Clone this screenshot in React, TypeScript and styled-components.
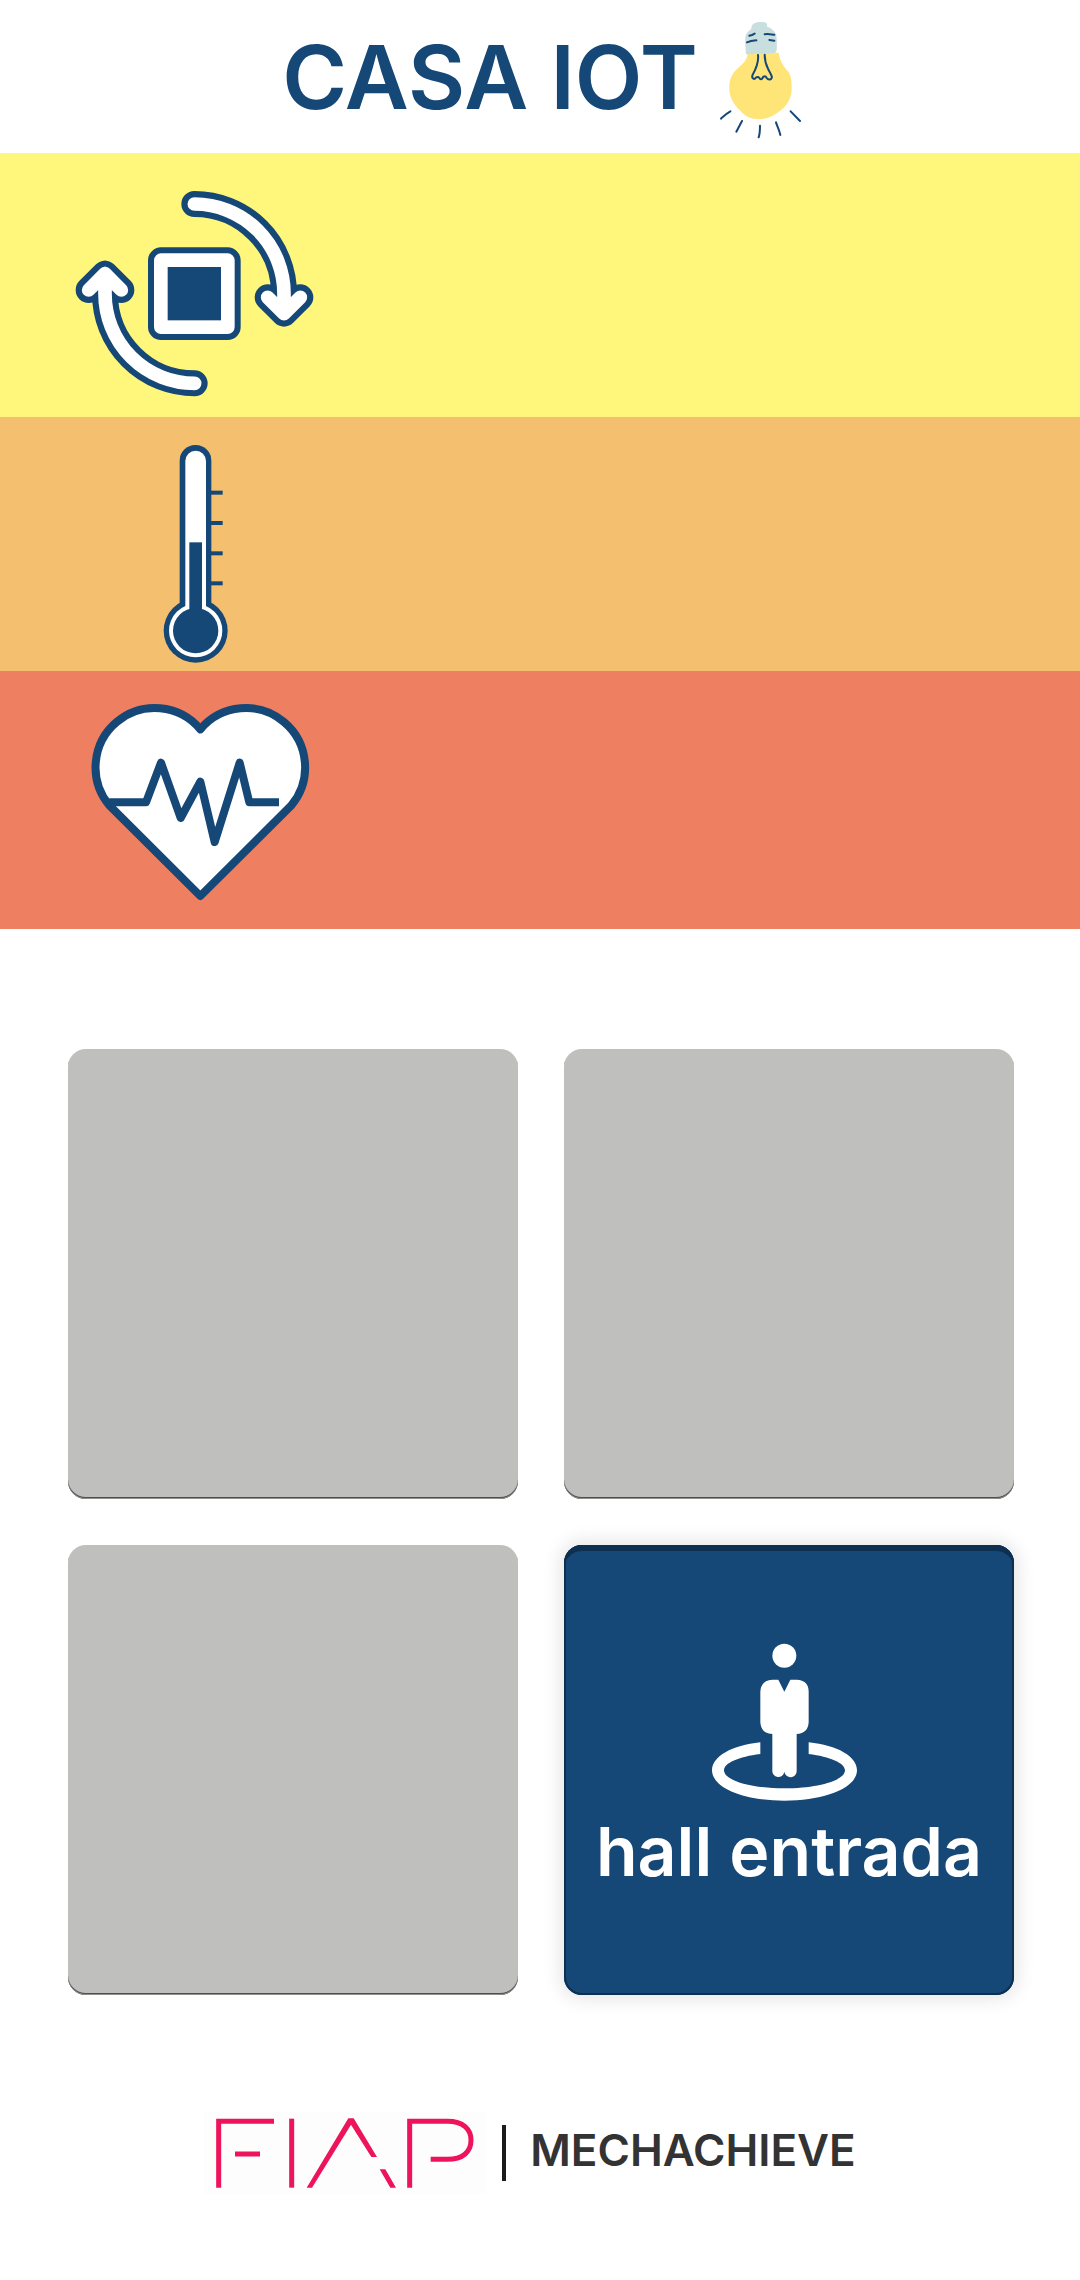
import React from "react";
import styled, { createGlobalStyle } from "styled-components";

const NAVY = "#154777";
const PINK = "#ee145b";

const GlobalStyle = createGlobalStyle`
  *, *::before, *::after { box-sizing: border-box; }
  body {
    margin: 0;
    background: #fff;
    font-family: Inter, "Liberation Sans", sans-serif;
    font-weight: 600;
  }
`;

const Page = styled.div`
  display: flex;
  flex-direction: column;
`;

const Header = styled.header`
  display: flex;
  justify-content: center;
  align-items: center;
  gap: 8px;
  padding-left: 4px;
`;

const Title = styled.h1`
  margin: 0;
  font-size: 88px;
  line-height: 100px;
  font-weight: 600;
  color: ${NAVY};
  white-space: nowrap;
`;

const Drawing = styled.svg`
  display: block;
  flex: none;
`;

const Reading = styled.section<{ $color: string }>`
  display: flex;
  align-items: center;
  padding: 0 60px;
  background: ${(p) => p.$color};
`;

const Rooms = styled.main`
  display: grid;
  grid-template-columns: 1fr 1fr;
  gap: 46px;
  padding: 120px 66px 0 68px;
`;

const Room = styled.button<{ $active?: boolean }>`
  display: flex;
  flex-direction: column;
  align-items: center;
  justify-content: center;
  aspect-ratio: 1;
  padding: 4px 0 0;
  border: 0;
  border-radius: 18px;
  font: inherit;
  color: #fff;
  cursor: pointer;
  background: ${(p) => (p.$active ? NAVY : "#bfbfbd")};
  box-shadow: ${(p) =>
    p.$active
      ? "inset 0 6px 0 #0d2f50, inset 0 0 0 2px #0d2f50, 0 0 18px 4px rgba(0, 0, 0, 0.1)"
      : "inset 0 -1px 0 #8f928f, inset 0 -2px 0 #4c4e4c"};
`;

const RoomName = styled.span`
  font-size: 68px;
  line-height: 100px;
  white-space: nowrap;
`;

const Footer = styled.footer`
  display: flex;
  justify-content: center;
  align-items: center;
  padding: 117px 20px 86px 0;
`;

const Divider = styled.span`
  width: 4px;
  height: 56px;
  margin: 0 24px 0 16px;
  background: #1b1b1b;
`;

const Team = styled.span`
  padding-bottom: 6px;
  font-size: 44px;
  line-height: 56px;
  color: #333;
`;

function Bulb() {
  return (
    <Drawing width="96" height="153" viewBox="18 0 288 459" fill="none" aria-hidden="true">
      <path
        d="M143 158H236C240 186 252 200 264 214C272 224 275 240 275 264C275 290 265 312 246 328C224 348 200 358 176 358C152 358 136 350 120 331C100 312 88 292 88 264C88 236 96 220 112 206C130 190 142 180 143 158Z"
        fill="#ffe478"
      />
      <path
        d="M138 163C136 140 134 118 137 106C141 96 148 92 154 86C154 74 162 66 182 66C194 65 202 68 201 74V80C214 84 226 94 229 106C231 122 231 140 230 150C228 158 224 160 216 160Z"
        fill="#c9dfdf"
      />
      <g stroke={NAVY} strokeWidth="6" strokeLinecap="round" strokeLinejoin="round">
        <path d="M148 107L156 105L164 101M141 127C150 123 158 122 169 121M194 103C204 101 212 103 223 104M208 120L223 122" />
        <path d="M174 165C177 188 168 206 158 224C154 234 160 238 165 236C170 230 175 230 178 234C181 239 184 239 187 235C191 226 197 227 200 234C205 241 214 240 216 232C214 222 208 216 204 206C198 194 194 180 194 164" />
        <path d="M91 334C80 340 74 346 63 356M126 363L109 395M180 377C180 390 180 400 176 412M228 367C232 380 238 390 241 405M272 334L300 363" />
      </g>
    </Drawing>
  );
}

const ARROWS =
  "M403 102A269 269 0 0 1 672 371V431M623 382L672 431L721 382M404 640A269 269 0 0 1 135 371V311M86 360L135 311L184 360";

function Rotation() {
  return (
    <Drawing width="270" height="264" viewBox="0 -51 810 792" fill="none" aria-hidden="true">
      <g strokeLinecap="round" strokeLinejoin="round">
        <path d={ARROWS} stroke={NAVY} strokeWidth="78" />
        <path d={ARROWS} stroke="#fff" strokeWidth="41" />
      </g>
      <rect x="273" y="241" width="260" height="260" rx="30" fill="#fff" stroke={NAVY} strokeWidth="18" />
      <rect x="323" y="291" width="160" height="160" fill={NAVY} />
    </Drawing>
  );
}

function Thermometer() {
  return (
    <Drawing width="270" height="254" viewBox="-240 -39 810 762" aria-hidden="true">
      <g fill={NAVY}>
        <rect x="119" y="45" width="95" height="520" rx="47" />
        <circle cx="167" cy="602" r="96" />
      </g>
      <g fill="#fff">
        <rect x="136" y="62" width="62" height="510" rx="31" />
        <circle cx="167" cy="602" r="80" />
      </g>
      <g fill={NAVY}>
        <rect x="148" y="337" width="38" height="240" />
        <circle cx="167" cy="602" r="68" />
        {[182, 273, 364, 454].map((y) => (
          <rect key={y} x="210" y={y} width="38" height="12" />
        ))}
      </g>
    </Drawing>
  );
}

function Heart() {
  return (
    <Drawing
      width="270"
      height="258"
      viewBox="-30 -27 810 774"
      fill="none"
      stroke={NAVY}
      strokeWidth="24"
      strokeLinejoin="round"
      aria-hidden="true"
    >
      <path d="M391 148A177 177 0 0 0 118 376L391 648L664 376A177 177 0 0 0 391 148Z" fill="#fff" />
      <path d="M118 367H228L273 248L332 414L391 305L434 486L509 248L538 367H627" />
    </Drawing>
  );
}

function Person() {
  return (
    <Drawing width="154" height="158" viewBox="96 70 462 474" fill="#fff" aria-hidden="true">
      <circle cx="313" cy="108" r="36" />
      <path d="M277 180H295L313 216L331 180H350Q386 182 386 216V308Q384 342 350 343V452A18 18 0 0 1 313 456A18 18 0 0 1 277 452V343Q243 342 241 308V216Q243 182 277 180Z" />
      <path d="M241 368V403C176 411 132 430 132 452C132 482 210 506 313 506C416 506 495 482 495 452C495 430 450 411 386 403V368C472 377 531 410 531 452C531 504 436 543 313 543C190 543 96 504 96 452C96 410 156 377 241 368Z" />
    </Drawing>
  );
}

function FiapLogo() {
  return (
    <Drawing
      width="282"
      height="82"
      viewBox="12 66 846 246"
      fill="none"
      stroke={PINK}
      strokeWidth="15"
      role="img"
      aria-label="FIAP"
    >
      <rect x="12" y="66" width="846" height="246" fill="#fdfdfd" stroke="none" />
      <path d="M222 94H56V293M105 192H180" />
      <path d="M275 86V293" />
      <path d="M320 293L445 85H461L531 201H514L453 104L336 293ZM539 238H556L588 293H571Z" fill={PINK} stroke="none" />
      <path d="M629 293V94H742C790 94 813 118 813 151C813 186 788 208 742 208H692" />
    </Drawing>
  );
}

export default function App() {
  return (
    <Page>
      <GlobalStyle />
      <Header>
        <Title>CASA IOT</Title>
        <Bulb />
      </Header>
      <Reading $color="#fff67c">
        <Rotation />
      </Reading>
      <Reading $color="#f4c06f">
        <Thermometer />
      </Reading>
      <Reading $color="#ef7f61">
        <Heart />
      </Reading>
      <Rooms>
        <Room type="button" />
        <Room type="button" />
        <Room type="button" />
        <Room type="button" $active>
          <Person />
          <RoomName>hall entrada</RoomName>
        </Room>
      </Rooms>
      <Footer>
        <FiapLogo />
        <Divider />
        <Team>MECHACHIEVE</Team>
      </Footer>
    </Page>
  );
}
